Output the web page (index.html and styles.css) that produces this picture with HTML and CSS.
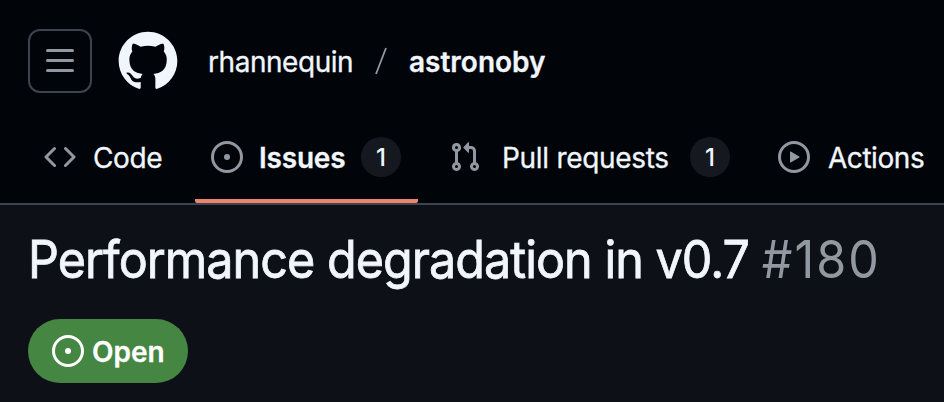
FILE: index.html
```html
<!DOCTYPE html>
<html lang="en">
<head>
<meta charset="utf-8">
<title>Performance degradation in v0.7</title>
<link rel="stylesheet" href="styles.css">
</head>
<body>
<header class="header">
  <div class="topbar">
    <button class="menu" aria-label="Menu"><svg class="icon" viewBox="0 0 16 16"><path d="M1 2.75A.75.75 0 0 1 1.75 2h12.5a.75.75 0 0 1 0 1.5H1.75A.75.75 0 0 1 1 2.75Zm0 5A.75.75 0 0 1 1.75 7h12.5a.75.75 0 0 1 0 1.5H1.75A.75.75 0 0 1 1 7.75ZM1.75 12h12.5a.75.75 0 0 1 0 1.5H1.75a.75.75 0 0 1 0-1.5Z"/></svg></button>
    <svg class="logo" viewBox="0 0 24 24"><path d="M12 1C5.9225 1 1 5.9225 1 12C1 16.8675 4.14875 20.9787 8.52125 22.4362C9.07125 22.5325 9.2775 22.2025 9.2775 21.9137C9.2775 21.6525 9.26375 20.7862 9.26375 19.865C6.5 20.3737 5.785 19.1912 5.565 18.5725C5.44125 18.2562 4.905 17.28 4.4375 17.0187C4.0525 16.8125 3.5025 16.3037 4.42375 16.29C5.29 16.2762 5.90875 17.0875 6.115 17.4175C7.105 19.0812 8.68625 18.6137 9.31875 18.325C9.415 17.61 9.70375 17.1287 10.02 16.8537C7.5725 16.5787 5.015 15.63 5.015 11.4225C5.015 10.2262 5.44125 9.23625 6.1425 8.46625C6.0325 8.19125 5.6475 7.06375 6.2525 5.55125C6.2525 5.55125 7.17375 5.2625 9.2775 6.67875C10.1575 6.43125 11.0925 6.3075 12.0275 6.3075C12.9625 6.3075 13.8975 6.43125 14.7775 6.67875C16.8813 5.24875 17.8025 5.55125 17.8025 5.55125C18.4075 7.06375 18.0225 8.19125 17.9125 8.46625C18.6138 9.23625 19.04 10.2125 19.04 11.4225C19.04 15.6437 16.4688 16.5787 14.0213 16.8537C14.42 17.1975 14.7638 17.8575 14.7638 18.8887C14.7638 20.36 14.75 21.5425 14.75 21.9137C14.75 22.2025 14.9563 22.5462 15.5063 22.4362C19.8513 20.9787 23 16.8537 23 12C23 5.9225 18.0775 1 12 1Z"/></svg>
    <span class="owner">rhannequin</span>
    <svg class="slash" viewBox="0 0 12 28"><path d="M1 27 11 1"/></svg>
    <span class="repo">astronoby</span>
  </div>
  <nav class="tabs">
    <a class="tab tab-code"><svg class="icon" viewBox="0 0 16 16"><path d="m11.28 3.22 4.25 4.25a.75.75 0 0 1 0 1.06l-4.25 4.25a.749.749 0 0 1-1.275-.326.749.749 0 0 1 .215-.734L13.94 8l-3.72-3.72a.749.749 0 0 1 .326-1.275.749.749 0 0 1 .734.215Zm-6.56 0a.751.751 0 0 1 1.042.018.751.751 0 0 1 .018 1.042L2.06 8l3.72 3.72a.749.749 0 0 1-.326 1.275.749.749 0 0 1-.734-.215L.47 8.53a.75.75 0 0 1 0-1.06Z"/></svg><span class="label">Code</span></a>
    <a class="tab tab-issues"><svg class="icon" viewBox="0 0 16 16"><path d="M8 9.5a1.5 1.5 0 1 0 0-3 1.5 1.5 0 0 0 0 3Z"/><path d="M8 0a8 8 0 1 1 0 16A8 8 0 0 1 8 0ZM1.5 8a6.5 6.5 0 1 0 13 0 6.5 6.5 0 0 0-13 0Z"/></svg><span class="label">Issues</span><span class="count">1</span></a>
    <a class="tab tab-pulls"><svg class="icon" viewBox="0 0 16 16"><path d="M1.5 3.25a2.25 2.25 0 1 1 3 2.122v5.256a2.251 2.251 0 1 1-1.5 0V5.372A2.25 2.25 0 0 1 1.5 3.25Zm5.677-.177L9.573.677A.25.25 0 0 1 10 .854V2.5h1A2.5 2.5 0 0 1 13.5 5v5.628a2.251 2.251 0 1 1-1.5 0V5a1 1 0 0 0-1-1h-1v1.646a.25.25 0 0 1-.427.177L7.177 3.427a.25.25 0 0 1 0-.354ZM3.75 2.5a.75.75 0 1 0 0 1.5.75.75 0 0 0 0-1.5Zm0 9.5a.75.75 0 1 0 0 1.5.75.75 0 0 0 0-1.5Zm8.25.75a.75.75 0 1 0 1.5 0 .75.75 0 0 0-1.5 0Z"/></svg><span class="label">Pull requests</span><span class="count">1</span></a>
    <a class="tab tab-actions"><svg class="icon" viewBox="0 0 16 16"><path d="M8 0a8 8 0 1 1 0 16A8 8 0 0 1 8 0ZM1.5 8a6.5 6.5 0 1 0 13 0 6.5 6.5 0 0 0-13 0Zm4.879-2.773 4.264 2.559a.25.25 0 0 1 0 .428l-4.264 2.559A.25.25 0 0 1 6 10.559V5.442a.25.25 0 0 1 .379-.215Z"/></svg><span class="label">Actions</span></a>
  </nav>
</header>
<main class="issue">
  <h1 class="title"><span class="name">Performance degradation in v0.7</span> <span class="number">#180</span></h1>
  <span class="state"><svg class="icon" viewBox="0 0 16 16"><path d="M8 9.5a1.5 1.5 0 1 0 0-3 1.5 1.5 0 0 0 0 3Z"/><path d="M8 0a8 8 0 1 1 0 16A8 8 0 0 1 8 0ZM1.5 8a6.5 6.5 0 1 0 13 0 6.5 6.5 0 0 0-13 0Z"/></svg><span class="state-label">Open</span></span>
</main>
</body>
</html>
```
FILE: styles.css
```css
* { box-sizing: border-box; }
body {
  margin: 0;
  height: 402px;
  overflow: hidden;
  background: #0d1117;
  color: #f0f6fc;
  font: 28px/42px Inter, "Liberation Sans", sans-serif;
  white-space: nowrap;
}
.icon { width: 32px; height: 32px; flex: none; fill: #9198a1; display: block; }
.header {
  height: 205px;
  background: #010409;
  border-bottom: 2px solid #3d444d;
  display: flex;
  flex-direction: column;
}
.topbar { display: flex; align-items: center; padding: 29px 28px 0; height: 93px; }
.menu {
  width: 64px;
  height: 64px;
  padding: 0;
  display: grid;
  place-items: center;
  background: transparent;
  border: 2px solid #3d444d;
  border-radius: 12px;
}
.logo { width: 64px; height: 64px; margin-left: 24px; fill: #f0f6fc; }
.owner { width: 145px; margin-left: 28px; padding-top: 2px; letter-spacing: -0.45px; }
.owner, .label { -webkit-text-stroke: 0.3px currentColor; }
.slash { width: 12px; height: 28px; margin-left: 22px; fill: none; stroke: #9198a1; stroke-width: 1.8; }
.repo { margin-left: 22px; padding-top: 2px; font-weight: 600; -webkit-text-stroke: 0.3px currentColor; }
.tabs { display: flex; flex: 1; padding: 18px 0 0 28px; }
.tab { display: flex; flex: none; align-items: center; padding: 0 16px; height: 92px; }
.label { margin-left: 16px; padding-top: 2px; letter-spacing: -0.35px; }
.tab-code { width: 167px; }
.tab-code .label { margin-left: 17px; }
.tab-issues {
  width: 223px;
  padding: 4px 17px 0 16px;
  border-bottom: 4px solid #ec8570;
  border-radius: 2px;
}
.tab-issues .label { font-weight: 600; letter-spacing: -0.2px; }
.tab-pulls { width: 313px; margin-left: 15px; }
.tab-pulls .label { margin-left: 21px; letter-spacing: -0.3px; }
.tab-actions { margin-left: 16px; }
.tab-actions .label { margin-left: 18px; letter-spacing: -0.45px; }
.count {
  width: 40px;
  height: 40px;
  margin-left: auto;
  border-radius: 20px;
  background: #15191f;
  font-size: 24px;
  font-weight: 500;
  line-height: 42px;
  text-align: center;
}
.issue { padding: 24px 28px 0; display: flex; flex-direction: column; align-items: flex-start; }
.title {
  margin: 0;
  font-size: 52px;
  line-height: 62px;
  height: 64px;
  font-weight: 400;
  letter-spacing: -1.05px;
  transform: scaleX(0.933);
  transform-origin: left;
}
.name { -webkit-text-stroke: 0.8px currentColor; }
.number { color: #9198a1; letter-spacing: 2.2px; }
.state {
  width: 160px;
  height: 64px;
  margin-top: 26px;
  padding-left: 24px;
  border-radius: 32px;
  background: #448642;
  color: #fff;
  display: flex;
  align-items: center;
  gap: 8px;
  font-weight: 600;
}
.state-label { padding-top: 2px; -webkit-text-stroke: 0.3px currentColor; }
.state .icon { fill: #fff; }
```
